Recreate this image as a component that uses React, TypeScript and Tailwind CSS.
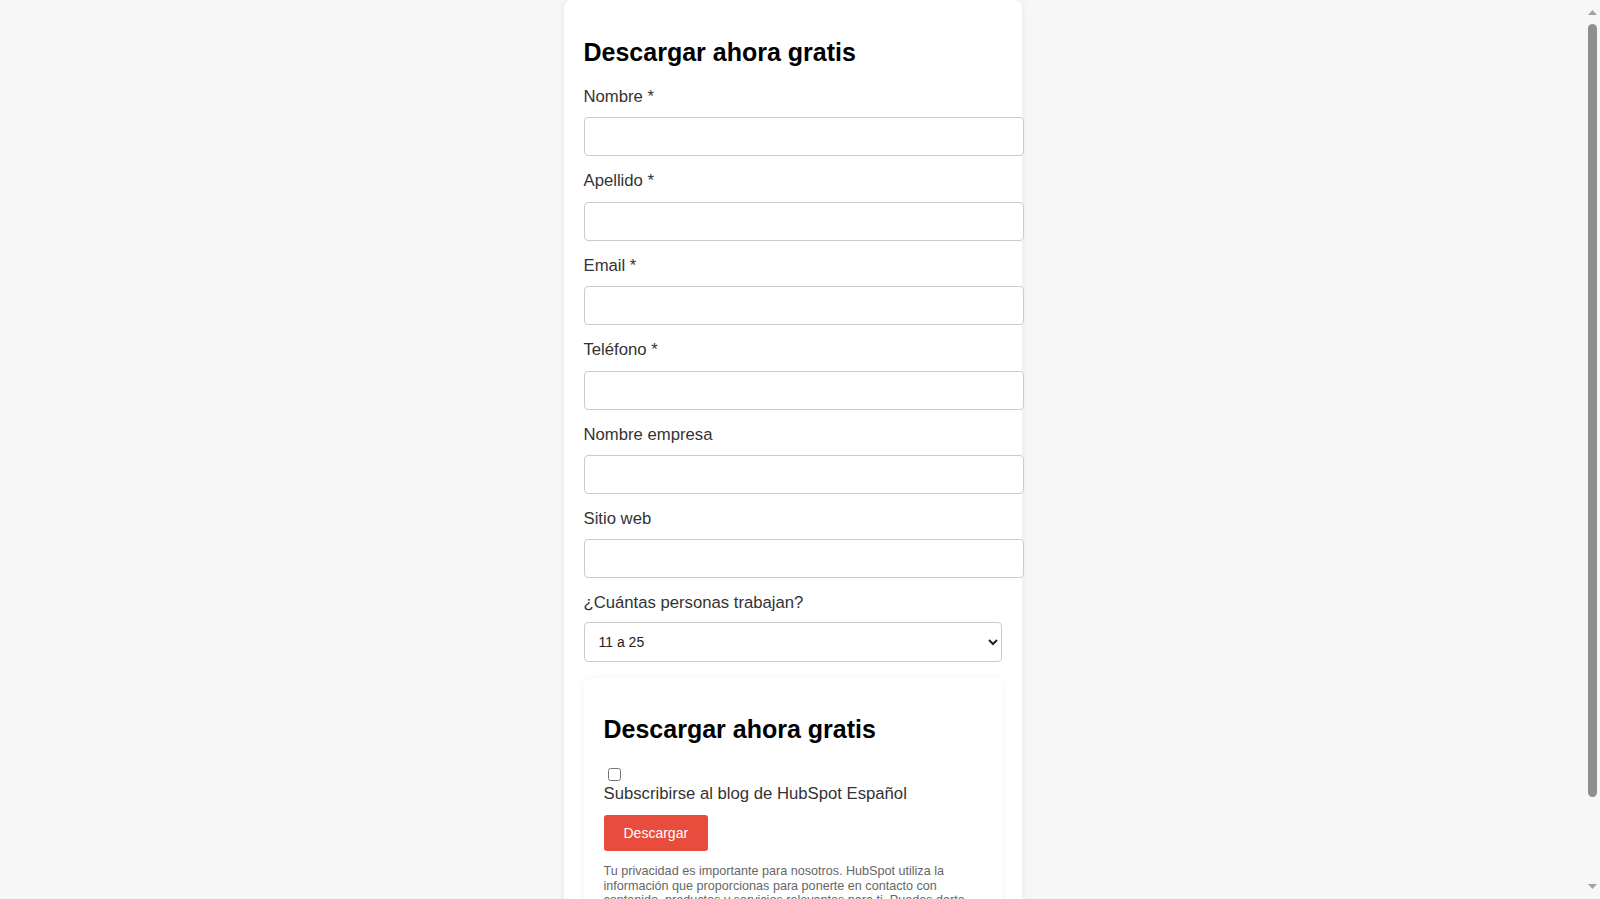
import { useState } from "react"

const fields = [
  { id: "firstname", label: "Nombre *", type: "text" },
  { id: "lastname", label: "Apellido *", type: "text" },
  { id: "email", label: "Email *", type: "email" },
  { id: "phone", label: "Teléfono *", type: "tel" },
  { id: "company", label: "Nombre empresa", type: "text" },
  { id: "website", label: "Sitio web", type: "text" },
]

const sizes = ["1 a 5", "6 a 10", "11 a 25", "26 a 50", "51 a 200", "201 a 1.000", "Más de 1.000"]

export default function App() {
  const [size, setSize] = useState("11 a 25")
  const [subscribe, setSubscribe] = useState(false)

  return (
    <div className="flex h-screen bg-[#f7f7f7] font-['Liberation_Sans',Arial,sans-serif] text-[#333]">
      <div className="flex-1 overflow-y-auto pb-[31px] [scrollbar-width:none]">
        <div className="mx-auto w-[458px] rounded-lg bg-white p-5 shadow-[0_0_8px_rgba(0,0,0,0.06)]">
          <h2 className="mb-[22px] mt-[19px] text-[25px] font-bold leading-[27px] text-black">Descargar ahora gratis</h2>

          {fields.map(f => (
            <div key={f.id}>
              <label htmlFor={f.id} className="mb-[11px] block text-[16.7px] leading-[18.4px]">
                {f.label}
              </label>
              <input
                id={f.id}
                type={f.type}
                className="mb-4 box-content block h-[17px] w-full rounded border border-[#ccc] bg-white p-[10px] text-[16px] focus:outline-none"
              />
            </div>
          ))}

          <label htmlFor="size" className="mb-[9px] block text-[16.7px] leading-[18.4px]">
            ¿Cuántas personas trabajan?
          </label>
          <select
            id="size"
            value={size}
            onChange={e => setSize(e.target.value)}
            className="mb-4 block h-[40px] w-full rounded border border-[#ccc] bg-white px-[10px] text-[14px] text-[#222]"
          >
            {sizes.map(s => (
              <option key={s} value={s}>{s}</option>
            ))}
          </select>

          <div className="rounded-lg bg-white p-5 shadow-[0_0_8px_rgba(0,0,0,0.06)]">
            <h2 className="mb-5 mt-[18px] text-[25px] font-bold leading-[27px] text-black">Descargar ahora gratis</h2>

            <label className="flex flex-col items-start text-[16.7px] leading-[18.4px]">
              <input
                type="checkbox"
                checked={subscribe}
                onChange={e => setSubscribe(e.target.checked)}
                className="mb-1 ml-1 mt-[5px] h-[13px] w-[13px]"
              />
              <span>Subscribirse al blog de HubSpot Español</span>
            </label>

            <button className="mt-3 rounded-[3px] bg-[#e74c3c] px-5 py-[10px] text-[14px] leading-[16px] text-white hover:bg-[#d84334]">
              Descargar
            </button>

            <p className="mt-[13px] text-[12.6px] leading-[14.4px] text-[#666]">
              Tu privacidad es importante para nosotros. HubSpot utiliza la información que proporcionas para ponerte
              en contacto con contenido, productos y servicios relevantes para ti. Puedes darte de baja de este tipo de
              comunicaciones en cualquier momento. Para obtener más información, consulta nuestra Política de
              Privacidad.
            </p>
          </div>
        </div>
      </div>

      {/* page scrollbar */}
      <div aria-hidden className="flex w-[15px] flex-col items-center bg-[#f7f7f7] py-[10px]">
        <svg width="9" height="5" viewBox="0 0 9 5" className="shrink-0">
          <path d="M0 5 L4.5 0 L9 5 Z" fill="#a3a3a3" />
        </svg>
        <div className="mt-[9px] h-[773px] w-[9px] rounded-full bg-[#8f8f8f]" />
        <div className="flex-1" />
        <svg width="9" height="5" viewBox="0 0 9 5" className="shrink-0">
          <path d="M0 0 L9 0 L4.5 5 Z" fill="#a3a3a3" />
        </svg>
      </div>
    </div>
  )
}
